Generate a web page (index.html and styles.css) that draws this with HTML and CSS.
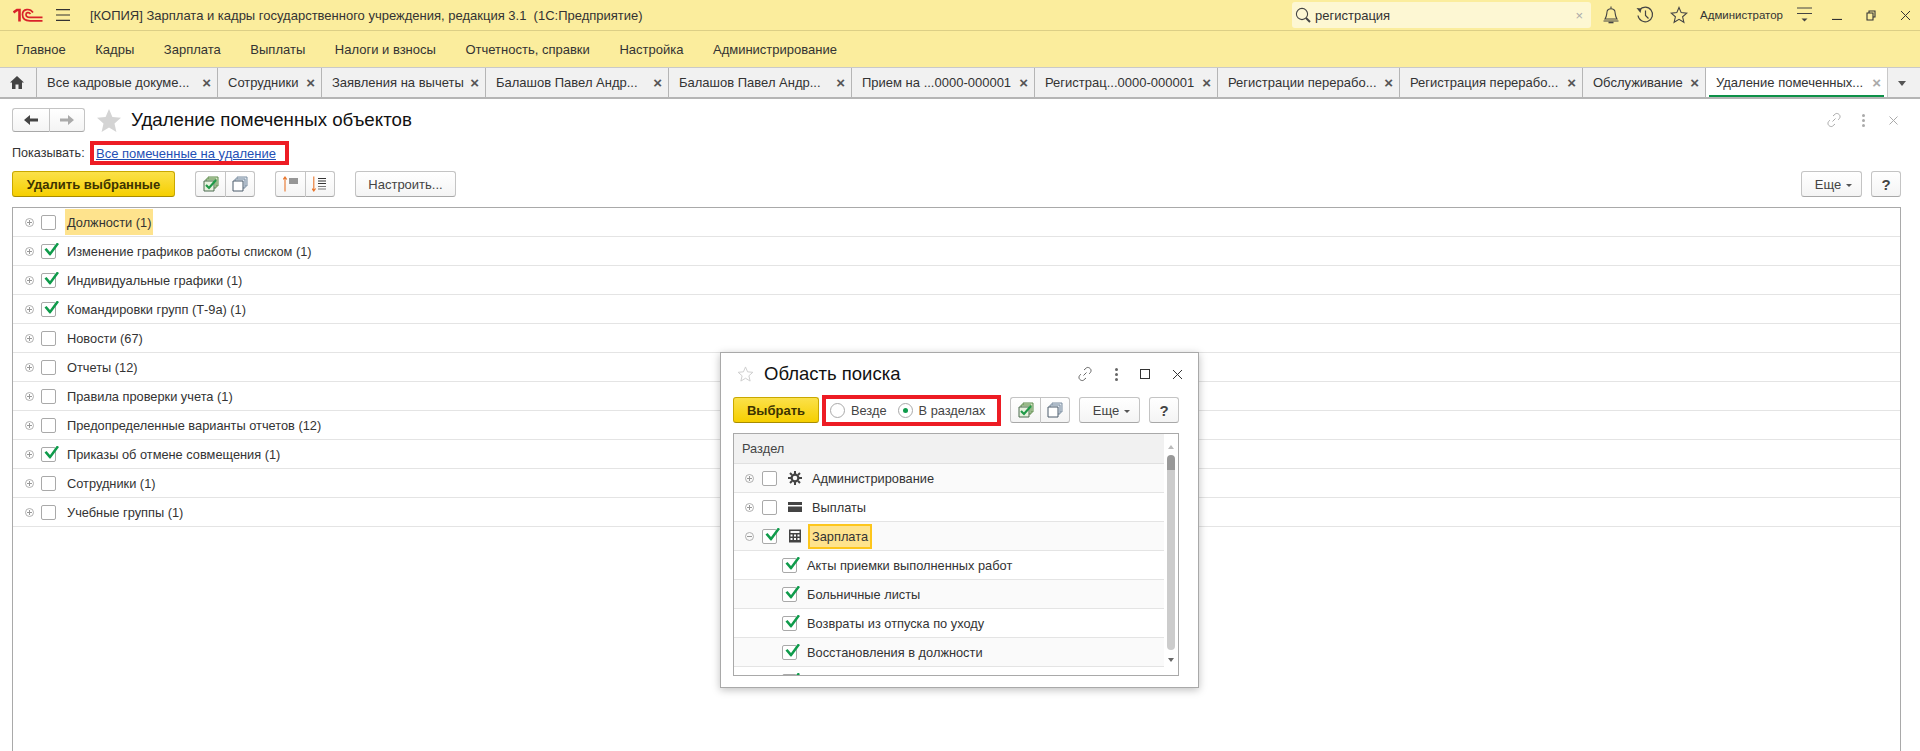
FILE: index.html
```html
<!DOCTYPE html>
<html lang="ru">
<head>
  <meta charset="UTF-8">
  <title>Удаление помеченных объектов</title>
  <link rel="stylesheet" href="styles.css">
</head>
<body>

<header class="titlebar">
  <svg class="logo" width="30" height="14" viewBox="0 0 30 14">
    <path d="M0.5 4.5 L4 2 H6.5 V13.5" fill="none" stroke="#d9222a" stroke-width="2.6"/>
    <path d="M20 4.5 C17 0 9.5 0.5 9.5 6.5 C9.5 11.5 13 12.8 17 12.8 H29.5" fill="none" stroke="#d9222a" stroke-width="1.7"/>
    <path d="M17.5 6 C16 3.8 13 4.5 13 6.5 C13 8.5 15 9.4 17 9.4 H29.5" fill="none" stroke="#d9222a" stroke-width="1.7"/>
  </svg>
  <svg class="burger" width="14" height="12" viewBox="0 0 14 12"><path d="M0 .7 H14 M0 6 H14 M0 11.3 H14" stroke="#333" stroke-width="1.2"/></svg>
  <div class="app-title">[КОПИЯ] Зарплата и кадры государственного учреждения, редакция 3.1&nbsp; (1С:Предприятие)</div>
  <div class="search">
    <svg width="16" height="16" viewBox="0 0 16 16"><circle cx="7" cy="7" r="5.6" fill="none" stroke="#444" stroke-width="1.1"/><path d="M11 11 L15 15" stroke="#444" stroke-width="2"/></svg>
    <span class="search-text">регистрация</span>
    <span class="search-clear">×</span>
  </div>
  <svg class="bell" width="16" height="18" viewBox="0 0 16 18"><path d="M2 13 C4 10 3.5 8 4.2 5 C5 2 11 2 11.8 5 C12.5 8 12 10 14 13 Z" fill="none" stroke="#444" stroke-width="1.1"/><path d="M8 .5 V2.5 M.5 15 H15.5" stroke="#444" stroke-width="1.1"/><path d="M5.5 16.5 H10.5" stroke="#444" stroke-width="1.6"/></svg>
  <svg class="history" width="18" height="18" viewBox="0 0 18 18"><path d="M3.5 4 A7.3 7.3 0 1 1 2 9.5" fill="none" stroke="#444" stroke-width="1.2"/><path d="M0.5 2 L5.5 2.5 L4.5 7 Z" fill="#444"/><path d="M9.5 4.5 V9.5 L12.5 12.5" fill="none" stroke="#444" stroke-width="1.2"/></svg>
  <svg class="star" width="18" height="18" viewBox="0 0 18 18"><path d="M9 1.5 L11.2 6.6 L16.8 7.1 L12.6 10.8 L13.9 16.3 L9 13.4 L4.1 16.3 L5.4 10.8 L1.2 7.1 L6.8 6.6 Z" fill="none" stroke="#444" stroke-width="1.1"/></svg>
  <div class="user">Администратор</div>
  <svg class="settings" width="15" height="16" viewBox="0 0 15 16"><path d="M0 1 H15 M0 6.5 H15" stroke="#444" stroke-width="1.2"/><path d="M4.5 11.5 H10.5 L7.5 14.5 Z" fill="#444"/></svg>
  <div class="win-btns">
    <svg width="10" height="10" viewBox="0 0 10 10"><path d="M0 9.5 H10" stroke="#333" stroke-width="1.2"/></svg>
    <svg width="10" height="11" viewBox="0 0 10 11"><path d="M3 3 V1 H9 V7 H7 M1 3 H7 V10 H1 Z" fill="none" stroke="#333" stroke-width="1.1"/></svg>
    <svg width="11" height="11" viewBox="0 0 11 11"><path d="M1 1 L10 10 M10 1 L1 10" stroke="#333" stroke-width="1"/></svg>
  </div>
</header>

<nav class="menu">
  <a>Главное</a>
  <a>Кадры</a>
  <a>Зарплата</a>
  <a>Выплаты</a>
  <a>Налоги и взносы</a>
  <a>Отчетность, справки</a>
  <a>Настройка</a>
  <a>Администрирование</a>
</nav>

<div class="tabs">
  <div class="tab tab-home">
    <svg width="14" height="13" viewBox="0 0 14 13"><path d="M7 0 L14 6.5 H12 V13 H8.5 V8.5 H5.5 V13 H2 V6.5 H0 Z" fill="#444"/></svg>
  </div>
  <div class="tab"><span>Все кадровые докуме...</span><i>×</i></div>
  <div class="tab"><span>Сотрудники</span><i>×</i></div>
  <div class="tab"><span>Заявления на вычеты</span><i>×</i></div>
  <div class="tab"><span>Балашов Павел Андр...</span><i>×</i></div>
  <div class="tab"><span>Балашов Павел Андр...</span><i>×</i></div>
  <div class="tab"><span>Прием на ...0000-000001</span><i>×</i></div>
  <div class="tab"><span>Регистрац...0000-000001</span><i>×</i></div>
  <div class="tab"><span>Регистрации перерабо...</span><i>×</i></div>
  <div class="tab"><span>Регистрация перерабо...</span><i>×</i></div>
  <div class="tab"><span>Обслуживание</span><i>×</i></div>
  <div class="tab tab-active"><span>Удаление помеченных...</span><i>×</i></div>
  <div class="tab-more"></div>
</div>

<main class="form">
  <div class="form-head">
    <div class="btn-group nav-group">
      <button class="btn"><svg width="14" height="10" viewBox="0 0 14 10"><path d="M0 5 L6 0 V3.5 H14 V6.5 H6 V10 Z" fill="#444"/></svg></button>
      <button class="btn"><svg width="14" height="10" viewBox="0 0 14 10"><path d="M14 5 L8 0 V3.5 H0 V6.5 H8 V10 Z" fill="#aaa"/></svg></button>
    </div>
    <svg class="fav" width="24" height="23" viewBox="0 0 24 23"><path d="M12 0 L15.4 8 L24 8.8 L17.5 14.4 L19.4 23 L12 18.5 L4.6 23 L6.5 14.4 L0 8.8 L8.6 8 Z" fill="#d4d4d4"/></svg>
    <h1>Удаление помеченных объектов</h1>
    <div class="head-right">
      <svg width="16" height="16" viewBox="0 0 16 16"><path d="M6.5 9.5 L9.5 6.5 M7 4 L9.5 1.8 C11 .6 14.5 2.5 14 5 C14 6 13 7 12 8 M9 12 L6.5 14.2 C5 15.4 1.5 13.5 2 11 C2 10 3 9 4 8" fill="none" stroke="#aaa" stroke-width="1"/></svg>
      <span class="dots"><b></b><b></b><b></b></span>
      <svg width="9" height="9" viewBox="0 0 9 9"><path d="M.5 .5 L8.5 8.5 M8.5 .5 L.5 8.5" stroke="#aaa" stroke-width="1"/></svg>
    </div>
  </div>

  <div class="show-row">
    <span class="show-label">Показывать:</span>
    <span class="red-box show-box"><a class="link">Все помеченные на удаление</a></span>
  </div>

  <div class="toolbar">
    <button class="btn btn-yellow btn-delete">Удалить выбранные</button>
    <div class="btn-group group-checks">
      <button class="btn"><svg width="16" height="16" viewBox="0 0 16 16"><use href="#ic-checkall"/></svg></button>
      <button class="btn"><svg width="16" height="16" viewBox="0 0 16 16"><use href="#ic-uncheckall"/></svg></button>
    </div>
    <div class="btn-group group-sort">
      <button class="btn"><svg width="16" height="16" viewBox="0 0 16 16"><path d="M2 15.5 V1.5 M.2 3.5 L2 1 L3.8 3.5" fill="none" stroke="#e8742a" stroke-width="1.1"/><path d="M6 3 H15 M6 5 H15 M6 7 H15" stroke="#333" stroke-width="1"/></svg></button>
      <button class="btn"><svg width="16" height="16" viewBox="0 0 16 16"><path d="M1.8 .5 V14.5 M0 12.5 L1.8 15 L3.6 12.5" fill="none" stroke="#e8742a" stroke-width="1.1"/><path d="M6 2.5 H14 M6 5 H14 M6 7.5 H14" stroke="#333" stroke-width="1"/><path d="M6 10.5 H14 M6 13 H14" stroke="#777" stroke-width="1"/></svg></button>
    </div>
    <button class="btn btn-setup">Настроить...</button>
    <div class="toolbar-right">
      <button class="btn btn-more">Еще <em></em></button>
      <button class="btn btn-help">?</button>
    </div>
  </div>

  <div class="tree">
    <div class="row"><u class="plus"></u><span class="check"></span><span class="row-text selected">Должности (1)</span></div>
    <div class="row"><u class="plus"></u><span class="check on"></span><span class="row-text">Изменение графиков работы списком (1)</span></div>
    <div class="row"><u class="plus"></u><span class="check on"></span><span class="row-text">Индивидуальные графики (1)</span></div>
    <div class="row"><u class="plus"></u><span class="check on"></span><span class="row-text">Командировки групп (Т-9а) (1)</span></div>
    <div class="row"><u class="plus"></u><span class="check"></span><span class="row-text">Новости (67)</span></div>
    <div class="row"><u class="plus"></u><span class="check"></span><span class="row-text">Отчеты (12)</span></div>
    <div class="row"><u class="plus"></u><span class="check"></span><span class="row-text">Правила проверки учета (1)</span></div>
    <div class="row"><u class="plus"></u><span class="check"></span><span class="row-text">Предопределенные варианты отчетов (12)</span></div>
    <div class="row"><u class="plus"></u><span class="check on"></span><span class="row-text">Приказы об отмене совмещения (1)</span></div>
    <div class="row"><u class="plus"></u><span class="check"></span><span class="row-text">Сотрудники (1)</span></div>
    <div class="row"><u class="plus"></u><span class="check"></span><span class="row-text">Учебные группы (1)</span></div>
  </div>
</main>

<section class="dialog">
  <div class="dialog-head">
    <svg class="dialog-star" width="17" height="16" viewBox="0 0 18 17"><path d="M9 1 L11.2 6.2 L16.8 6.7 L12.6 10.4 L13.9 16 L9 13 L4.1 16 L5.4 10.4 L1.2 6.7 L6.8 6.2 Z" fill="none" stroke="#ccc" stroke-width="1"/></svg>
    <h2>Область поиска</h2>
    <div class="head-right">
      <svg width="16" height="16" viewBox="0 0 16 16"><path d="M6.5 9.5 L9.5 6.5 M7 4 L9.5 1.8 C11 .6 14.5 2.5 14 5 C14 6 13 7 12 8 M9 12 L6.5 14.2 C5 15.4 1.5 13.5 2 11 C2 10 3 9 4 8" fill="none" stroke="#666" stroke-width="1"/></svg>
      <span class="dots dots-dark"><b></b><b></b><b></b></span>
      <span class="maximize"></span>
      <svg width="11" height="11" viewBox="0 0 11 11"><path d="M1 1 L10 10 M10 1 L1 10" stroke="#333" stroke-width="1"/></svg>
    </div>
  </div>
  <div class="dialog-bar">
    <button class="btn btn-yellow btn-choose">Выбрать</button>
    <div class="red-box radio-box">
      <span class="radio"></span><span class="radio-label">Везде</span>
      <span class="radio on"></span><span class="radio-label">В разделах</span>
    </div>
    <div class="btn-group group-checks2">
      <button class="btn"><svg width="16" height="16" viewBox="0 0 16 16"><use href="#ic-checkall"/></svg></button>
      <button class="btn"><svg width="16" height="16" viewBox="0 0 16 16"><use href="#ic-uncheckall"/></svg></button>
    </div>
    <button class="btn btn-more">Еще <em></em></button>
    <button class="btn btn-help">?</button>
  </div>
  <div class="list">
    <div class="list-main">
      <div class="list-header">Раздел</div>
      <div class="row"><u class="plus"></u><span class="check"></span>
        <svg class="section-ic" width="14" height="14" viewBox="0 0 14 14"><circle cx="7" cy="7" r="3.4" fill="none" stroke="#444" stroke-width="2.2"/><path d="M7 0 V3 M7 11 V14 M0 7 H3 M11 7 H14 M2 2 L4 4 M10 10 L12 12 M12 2 L10 4 M4 10 L2 12" stroke="#444" stroke-width="2"/></svg>
        <span class="row-text">Администрирование</span></div>
      <div class="row"><u class="plus"></u><span class="check"></span>
        <svg class="section-ic" width="14" height="14" viewBox="0 0 14 14"><path d="M0 2 H14 V5 H0 Z M0 6.5 H14 V12 H0 Z" fill="#444"/></svg>
        <span class="row-text">Выплаты</span></div>
      <div class="row"><u class="plus minus"></u><span class="check on"></span>
        <svg class="section-ic" width="14" height="14" viewBox="0 0 14 14"><path d="M1 .5 H13 V13.5 H1 Z M2.5 2 V4 H11.5 V2 Z" fill="#444" fill-rule="evenodd"/><path d="M2.5 5.5 H4.5 V7.5 H2.5 Z M6 5.5 H8 V7.5 H6 Z M9.5 5.5 H11.5 V7.5 H9.5 Z M2.5 9 H4.5 V11 H2.5 Z M6 9 H8 V11 H6 Z M9.5 9 H11.5 V11 H9.5 Z" fill="#fff"/></svg>
        <span class="row-text focused">Зарплата</span></div>
      <div class="row row-sub"><span class="check on"></span><span class="row-text">Акты приемки выполненных работ</span></div>
      <div class="row row-sub"><span class="check on"></span><span class="row-text">Больничные листы</span></div>
      <div class="row row-sub"><span class="check on"></span><span class="row-text">Возвраты из отпуска по уходу</span></div>
      <div class="row row-sub"><span class="check on"></span><span class="row-text">Восстановления в должности</span></div>
      <div class="row row-sub"><span class="check on"></span></div>
    </div>
    <div class="scroll">
      <span class="arrow-up"></span>
      <span class="thumb"></span>
      <span class="arrow-down"></span>
    </div>
  </div>
</section>

<svg width="0" height="0" class="defs">
  <symbol id="ic-checkall" viewBox="0 0 16 16">
    <path d="M5 3 V1 H15 V10 H13 M3 5 V3 H13 V12 H11" fill="#d5e8c8" stroke="#5c8a4a" stroke-width="1"/>
    <path d="M1 5 H11 V15 H1 Z" fill="#e8f2df" stroke="#4b6b4e" stroke-width="1"/>
    <path d="M3 9 L6 12 L13 4" fill="none" stroke="#1f9a48" stroke-width="2.2"/>
  </symbol>
  <symbol id="ic-uncheckall" viewBox="0 0 16 16">
    <path d="M5 3 V1 H15 V10 H13 M3 5 V3 H13 V12 H11" fill="#dfe6ee" stroke="#7b8da0" stroke-width="1"/>
    <path d="M1 5 H11 V15 H1 Z" fill="#fff" stroke="#4a5a6a" stroke-width="1"/>
  </symbol>
</svg>

</body>
</html>
```

FILE: styles.css
```css
* {
  box-sizing: border-box;
}

body {
  margin: 0;
  height: 751px;
  overflow: hidden;
  background-color: #fff;
  color: #333;
  font-family: "Liberation Sans", Arial, sans-serif;
  font-size: 13px;
  display: flex;
  flex-direction: column;
}

svg {
  display: block;
  flex: none;
}

.defs {
  position: absolute;
}

/* top bar */
.titlebar {
  height: 31px;
  flex: none;
  display: flex;
  align-items: center;
  background-color: #fbed9d;
  border-bottom: 1px solid #dccf86;
  padding-left: 13px;
}

.burger {
  margin-left: 13px;
}

.app-title {
  margin-left: 20px;
  width: 1202px;
  flex: none;
  white-space: nowrap;
}

.search {
  width: 299px;
  height: 26px;
  flex: none;
  display: flex;
  align-items: center;
  padding-left: 3px;
  border-radius: 3px;
  background-color: #fdf7d3;
}

.search-text {
  margin-left: 4px;
}

.search-clear {
  margin-left: auto;
  margin-right: 8px;
  color: #aaa;
}

.bell {
  margin-left: 12px;
}

.history {
  margin-left: 17px;
}

.star {
  margin-left: 16px;
}

.user {
  margin-left: 12px;
  font-size: 11.5px;
  white-space: nowrap;
}

.settings {
  margin-left: 14px;
}

.win-btns {
  margin-left: auto;
  margin-right: 9px;
  display: flex;
  align-items: center;
  gap: 24px;
}

/* sections menu */
.menu {
  height: 37px;
  flex: none;
  display: flex;
  align-items: center;
  gap: 29.6px;
  padding-left: 16px;
  background-color: #fbed9d;
  border-bottom: 1px solid #c9c9c9;
}

/* open windows */
.tabs {
  height: 31px;
  flex: none;
  display: grid;
  grid-template-columns: 37px 181px 104px 164px 183px 183px 183px 183px 182px 183px 123px 182px 1fr;
  background-color: #f1f1f1;
  border-bottom: 2px solid #b5b5b5;
}

.tab {
  display: flex;
  align-items: center;
  padding: 0 6px 0 10px;
  border-right: 1px solid #b5b5b5;
  white-space: nowrap;
  overflow: hidden;
}

.tab span {
  flex: 1;
  overflow: hidden;
}

.tab i {
  font-style: normal;
  font-weight: bold;
  color: #555;
  font-size: 15px;
}

.tab-home {
  padding: 0 0 0 10px;
}

.tab-active {
  background-color: #fff;
  border-right-color: #c9c9c9;
  position: relative;
}

.tab-active::after {
  content: "";
  position: absolute;
  left: 3px;
  right: 3px;
  bottom: 0;
  height: 2px;
  background-color: #0d9148;
}

.tab-active i {
  color: #aaa;
}

.tab-more {
  position: relative;
}

.tab-more::after {
  content: "";
  position: absolute;
  left: 10px;
  top: 13px;
  border: 4px solid transparent;
  border-top: 5px solid #555;
  border-bottom: 0;
}

/* main form */
.form {
  flex: 1;
  min-height: 0;
  display: flex;
  flex-direction: column;
  padding: 0 19px 0 12px;
}

.form-head {
  height: 26px;
  margin-top: 8px;
  flex: none;
  display: flex;
  align-items: center;
}

.head-right {
  margin-left: auto;
  display: flex;
  align-items: center;
  gap: 20px;
  padding-right: 3px;
}

.form-head .head-right svg:last-child {
  margin-left: 4px;
}

.dots {
  display: flex;
  flex-direction: column;
  gap: 2px;
}

.dots b {
  display: block;
  width: 3px;
  height: 3px;
  border-radius: 50%;
  background-color: #aaa;
}

.dots-dark b {
  background-color: #666;
}

h1 {
  margin: 0 0 0 10px;
  font-size: 18.7px;
  font-weight: normal;
  color: #111;
}

.fav {
  margin-left: 12px;
}

.show-row {
  height: 24px;
  margin-top: 8px;
  flex: none;
  display: flex;
  align-items: center;
}

.show-label {
  width: 78px;
  font-size: 12.6px;
}

.red-box {
  border: 4px solid #ed1c24;
  background-color: #fff;
}

.show-box {
  width: 199px;
  height: 24px;
  display: flex;
  align-items: center;
  padding-left: 2px;
}

.link {
  color: #1f4fb5;
  text-decoration: underline;
  white-space: nowrap;
}

.toolbar {
  height: 26px;
  margin-top: 6px;
  flex: none;
  display: flex;
  align-items: stretch;
}

.toolbar-right {
  margin-left: auto;
  display: flex;
  gap: 9px;
}

.btn {
  height: 26px;
  padding: 0;
  display: flex;
  align-items: center;
  justify-content: center;
  background: linear-gradient(#fff, #f4f4f4);
  border: 1px solid #c4c4c4;
  border-bottom-color: #a8a8a8;
  border-radius: 3px;
  color: #444;
  font-family: inherit;
  font-size: 13px;
}

.btn-yellow {
  background: linear-gradient(#fbe14a, #f6cf00);
  border-color: #c9a800;
  border-bottom-color: #a88c00;
  color: #3d3300;
  font-weight: bold;
}

.btn-delete {
  width: 163px;
}

.btn-choose {
  width: 86px;
}

.btn-setup {
  width: 101px;
  margin-left: 20px;
}

.btn-more {
  width: 61px;
  gap: 5px;
  padding-left: 4px;
}

.btn-more em {
  border: 3px solid transparent;
  border-top: 3px solid #555;
  border-bottom: 0;
  margin-top: 2px;
}

.btn-help {
  width: 30px;
  font-size: 15px;
  font-weight: bold;
}

.btn-group {
  display: flex;
}

.btn-group .btn {
  width: 30px;
  border-radius: 0;
}

.btn-group .btn:first-child {
  border-radius: 3px 0 0 3px;
  border-right: 0;
}

.btn-group .btn:last-child {
  border-radius: 0 3px 3px 0;
}

.nav-group .btn {
  width: 36.5px;
  height: 24px;
}

.group-checks {
  margin-left: 20px;
}

.group-sort {
  margin-left: 20px;
}

.tree {
  flex: 1;
  margin-top: 10px;
  border: 1px solid #a9a9a9;
  border-bottom: 0;
}

.row {
  height: 29px;
  display: flex;
  align-items: center;
  border-bottom: 1px solid #e4e4e4;
  padding-left: 12px;
}

.row-text {
  height: 26px;
  display: flex;
  align-items: center;
  padding: 0 2px;
  color: #333;
  font-size: 12.8px;
  white-space: nowrap;
}

.row .check + .row-text {
  margin-left: 9px;
}

.selected {
  background-color: #fee38d;
}

.plus {
  width: 9px;
  height: 9px;
  flex: none;
  border: 1px solid #b0b0b0;
  border-radius: 50%;
  position: relative;
  text-decoration: none;
}

.plus::before {
  content: "";
  position: absolute;
  left: 1px;
  right: 1px;
  top: 3px;
  height: 1px;
  background-color: #999;
}

.plus::after {
  content: "";
  position: absolute;
  top: 1px;
  bottom: 1px;
  left: 3px;
  width: 1px;
  background-color: #999;
}

.minus::after {
  display: none;
}

.check {
  width: 15px;
  height: 15px;
  flex: none;
  margin-left: 7px;
  border: 1px solid #a9a9a9;
  border-radius: 2px;
  background-color: #fff;
  position: relative;
}

.check.on::after {
  content: "";
  position: absolute;
  left: 1px;
  top: -2px;
  width: 17px;
  height: 15px;
  background-color: #0f9b4b;
  clip-path: polygon(1.5px 7px, 3.5px 5.5px, 7px 9.5px, 14px 0, 16px 1.5px, 7.5px 13px, 6.5px 13px);
}

/* search area dialog */
.dialog {
  position: absolute;
  left: 720px;
  top: 352px;
  width: 479px;
  height: 336px;
  padding: 0 19px 0 12px;
  background-color: #fff;
  border: 1px solid #a9a9a9;
  box-shadow: 0 2px 8px rgba(0, 0, 0, 0.25);
}

.dialog-head {
  height: 30px;
  margin-top: 6px;
  margin-right: -4px;
  display: flex;
  align-items: center;
}

.dialog-star {
  margin-left: 4px;
}

.dialog-head .head-right {
  gap: 22px;
  padding-right: 0;
}

.maximize {
  width: 10px;
  height: 10px;
  border: 1px solid #333;
}

h2 {
  margin: 0 0 0 10px;
  font-size: 18.5px;
  font-weight: normal;
  color: #111;
}

.dialog-bar {
  margin-top: 6px;
  display: flex;
  align-items: center;
  height: 30px;
}

.radio-box {
  margin-left: 3px;
  width: 179px;
  height: 31px;
  flex: none;
  display: flex;
  align-items: center;
  padding-left: 4px;
}

.radio {
  width: 15px;
  height: 15px;
  flex: none;
  border: 1px solid #a9a9a9;
  border-radius: 50%;
  position: relative;
}

.radio.on::after {
  content: "";
  position: absolute;
  left: 4px;
  top: 4px;
  width: 5px;
  height: 5px;
  border-radius: 50%;
  background-color: #0f9b4b;
}

.radio-label {
  margin-left: 6px;
  margin-right: 11px;
  color: #444;
  font-size: 12.8px;
  white-space: nowrap;
}

.group-checks2 {
  margin-left: 9px;
}

.dialog-bar .btn-more {
  margin-left: 9px;
}

.dialog-bar .btn-help {
  margin-left: 9px;
}

.list {
  margin-top: 8px;
  height: 243px;
  border: 1px solid #a9a9a9;
  display: flex;
  overflow: hidden;
}

.list-main {
  flex: 1;
  min-width: 0;
}

.list-header {
  height: 30px;
  display: flex;
  align-items: center;
  padding-left: 8px;
  background-color: #f1f1f1;
  border-bottom: 1px solid #e0e0e0;
  color: #444;
  font-size: 12.8px;
}

.list .row {
  padding-left: 11px;
}

.list .row:nth-child(even) {
  background-color: #fafafa;
}

.list .check {
  margin-left: 8px;
}

.section-ic {
  margin-left: 11px;
}

.section-ic + .row-text {
  margin-left: 8px;
}

.list .row .focused {
  margin-left: 6px;
  height: 25px;
  background-color: #fee38d;
  border: 2px solid #fdc61c;
}

.list .row-sub {
  padding-left: 40px;
}

.row-sub .check + .row-text {
  margin-left: 8px;
}

.scroll {
  width: 14px;
  flex: none;
  display: flex;
  flex-direction: column;
  align-items: center;
}

.arrow-up {
  margin-top: 11px;
  border: 3.5px solid transparent;
  border-bottom: 4px solid #bbb;
  border-top: 0;
}

.thumb {
  margin-top: 6px;
  width: 8px;
  height: 195px;
  border-radius: 4px;
  background: linear-gradient(#999 15px, #ccc 15px);
}

.arrow-down {
  margin-top: 8px;
  border: 3.5px solid transparent;
  border-top: 4px solid #666;
  border-bottom: 0;
}
```
